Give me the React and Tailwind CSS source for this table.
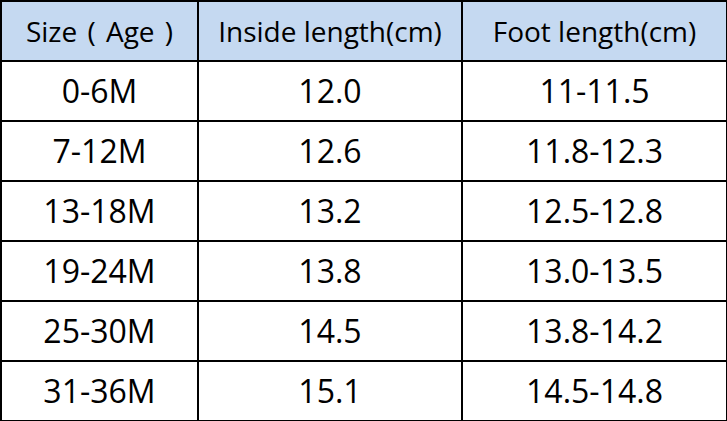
const ROWS = [
  ['0-6M', '12.0', '11-11.5'],
  ['7-12M', '12.6', '11.8-12.3'],
  ['13-18M', '13.2', '12.5-12.8'],
  ['19-24M', '13.8', '13.0-13.5'],
  ['25-30M', '14.5', '13.8-14.2'],
  ['31-36M', '15.1', '14.5-14.8'],
]

export default function App() {
  return (
    <div className="w-[727px] h-[421px] bg-white font-['Open_Sans',sans-serif] text-black">
      <table className="border-collapse table-fixed w-[726px]">
        <colgroup>
          <col className="w-[197px]" />
          <col className="w-[264px]" />
          <col className="w-[265px]" />
        </colgroup>
        <thead>
          <tr className="h-[60px] bg-[#c5d9f1]">
            <th className="border-2 border-black font-normal text-center text-[28px] leading-none [word-spacing:3px]">Size ( Age )</th>
            <th className="border-2 border-black font-normal text-center text-[28px] leading-none">Inside length(cm)</th>
            <th className="border-2 border-black font-normal text-center text-[28px] leading-none">Foot length(cm)</th>
          </tr>
        </thead>
        <tbody>
          {ROWS.map((r) => (
            <tr key={r[0]} className="h-[60px]">
              {r.map((c, i) => (
                <td key={i} className="border-2 border-black text-center text-[32px] leading-none">{c}</td>
              ))}
            </tr>
          ))}
        </tbody>
      </table>
    </div>
  )
}
